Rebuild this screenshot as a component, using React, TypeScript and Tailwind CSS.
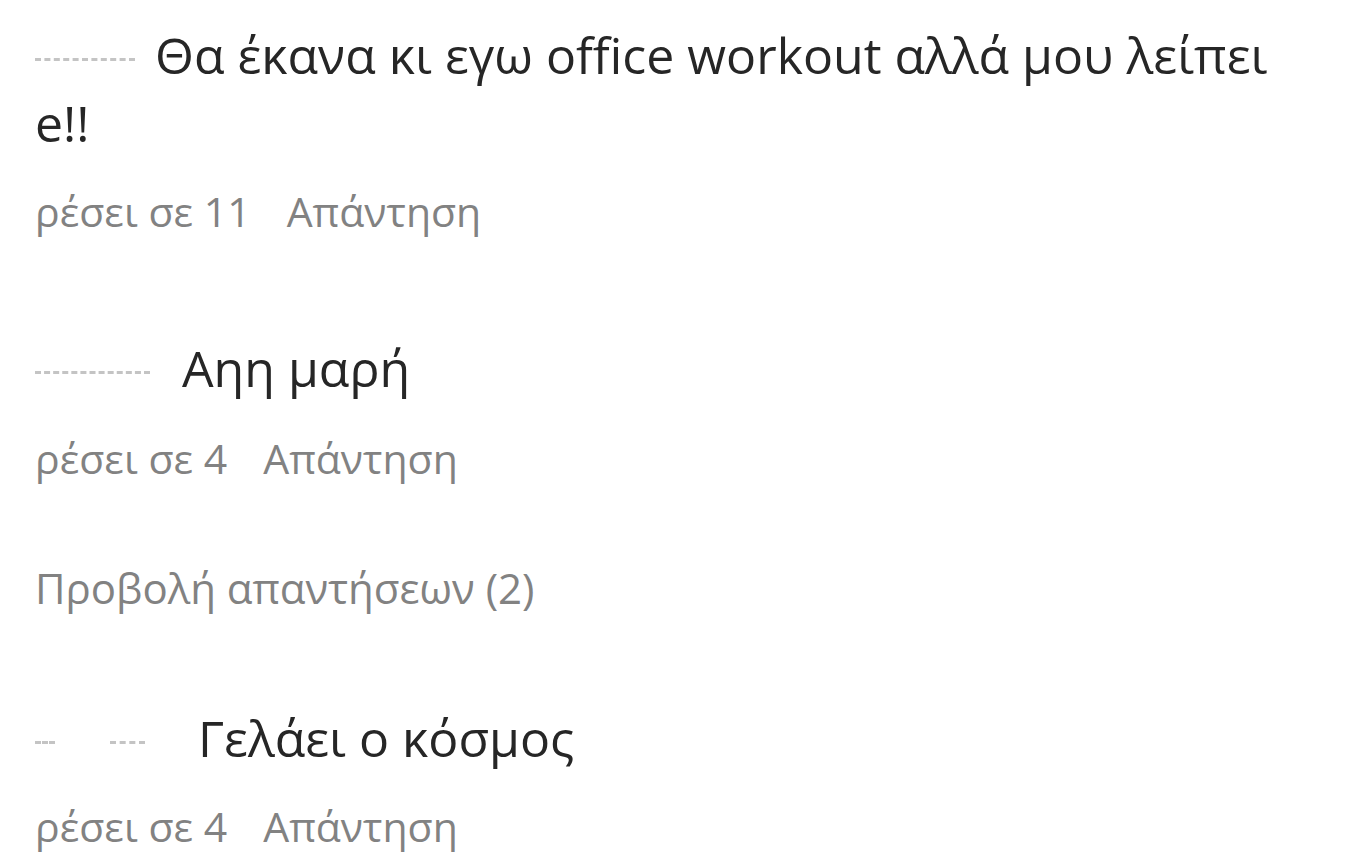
import React from "react";

type Comment = {
  id: string;
  user: React.ReactNode;
  body: string;
  cont?: string;
  likes: number;
};

// username is cropped and blurred in the capture, so we fake the faint remnants
const Dash = ({ className }: { className: string }) => (
  <span className={`inline-block h-[6px] border-t-[3px] border-dashed border-[#c4c4c4] align-middle ${className}`} />
);

const comments: Comment[] = [
  {
    id: "c1",
    user: <Dash className="mr-[20px] w-[100px]" />,
    body: "Θα έκανα κι εγω office workout αλλά μου λείπει",
    cont: "e!!",
    likes: 11
  },
  { id: "c2", user: <Dash className="mr-[32px] w-[115px]" />, body: "Αηη μαρή", likes: 4 },
  {
    id: "c3",
    user: (
      <>
        <Dash className="mr-[55px] w-[20px]" />
        <Dash className="mr-[53px] w-[35px]" />
      </>
    ),
    body: "Γελάει ο κόσμος",
    likes: 4
  }
];

const Meta = ({ likes }: { likes: number }) => (
  <div className="flex gap-[36px] text-[41px] leading-[50px] text-[#828282]">
    <span>ρέσει σε {likes}</span>
    <span>Απάντηση</span>
  </div>
);

export default function App() {
  return (
    <div
      className="h-[855px] w-[1360px] overflow-hidden bg-white pl-[35px] text-[#262626]"
      style={{ fontFamily: '"Open Sans", "Noto Sans", sans-serif' }}
    >
      <div className="flex flex-col pt-[21px]">
        <div className="text-[50px] leading-[68px] whitespace-nowrap">
          <div>
            {comments[0].user}
            {comments[0].body}
          </div>
          <div>{comments[0].cont}</div>
        </div>
        <div className="mt-[29px]">
          <Meta likes={comments[0].likes} />
        </div>

        <div className="mt-[98px] text-[50px] leading-[68px]">
          {comments[1].user}
          {comments[1].body}
        </div>
        <div className="mt-[31px]">
          <Meta likes={comments[1].likes} />
        </div>

        <div className="mt-[80px] text-[42px] leading-[50px] text-[#828282]">Προβολή απαντήσεων (2)</div>

        <div className="mt-[91px] text-[50px] leading-[68px]">
          {comments[2].user}
          {comments[2].body}
        </div>
        <div className="mt-[29px]">
          <Meta likes={comments[2].likes} />
        </div>
      </div>
    </div>
  );
}
